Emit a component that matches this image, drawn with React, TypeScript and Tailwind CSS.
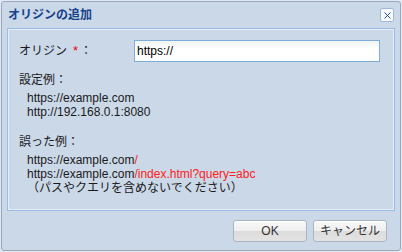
import { X } from 'lucide-react';

const font = { fontFamily: '"Liberation Sans", "Noto Sans CJK JP", sans-serif' };

function Btn({ label }: { label: string }) {
  return (
    <button className="h-[22px] w-[74px] rounded-[3px] border border-[#a9b3c2] bg-[linear-gradient(#f9f9f9_0%,#efefef_50%,#dcdcdc_50%,#e3e3e3_100%)] text-[12px] text-[#333] shadow-[inset_0_1px_0_#fff]">
      {label}
    </button>
  );
}

export default function App() {
  return (
    <div className="h-[252px] w-[402px] bg-[#dfe8f3] p-px" style={font}>
      <div className="flex h-[250px] flex-col rounded-[3px] border border-[#9ba8ba] bg-[#cbd8e8] px-[5px]">
        <div className="flex h-[26px] items-center justify-between pl-[1px] pr-[1px]">
          <span className="text-[12px] font-bold text-[#15428b]">オリジンの追加</span>
          <span className="flex h-[14px] w-[14px] items-center justify-center rounded-[2px] border border-[#9fb8e0] bg-[#f7f9fd] text-[#15428b]">
            <X size={11} strokeWidth={2} />
          </span>
        </div>
        <div className="h-[183px] border border-[#99bbe8] shadow-[inset_1px_1px_0_#e4ecf7,inset_-1px_-1px_0_#e4ecf7] pl-[11px] pr-[14px] pt-[11px] text-[12px] leading-[14px] text-[#1a1a1a]">
          <div className="flex h-[22px] items-center">
            <span className="w-[115px]">
              オリジン<span className="ml-[6px] mr-[2px] text-[13px] text-red-600">*</span>：
            </span>
            <input
              defaultValue="https://"
              className="h-[22px] flex-1 border border-[#7eadd9] bg-[linear-gradient(#f1f3f3,#ffffff_40%)] px-[2px] text-[12px] text-black outline-none"
              style={font}
            />
          </div>
          <div className="mt-[11px]">設定例：</div>
          <div className="mt-[4px] pl-[8px]">
            <div>https://example.com</div>
            <div>http://192.168.0.1:8080</div>
          </div>
          <div className="mt-[16px]">誤った例：</div>
          <div className="mt-[4px] pl-[8px]">
            <div>
              https://example.com<span className="text-[#ff2020]">/</span>
            </div>
            <div>
              https://example.com<span className="text-[#ff2020]">/index.html?query=abc</span>
            </div>
            <div>（パスやクエリを含めないでください）</div>
          </div>
        </div>
        <div className="flex flex-1 items-start justify-end gap-[6px] pr-[8px] pt-[9px]">
          <Btn label="OK" />
          <Btn label="キャンセル" />
        </div>
      </div>
    </div>
  );
}
